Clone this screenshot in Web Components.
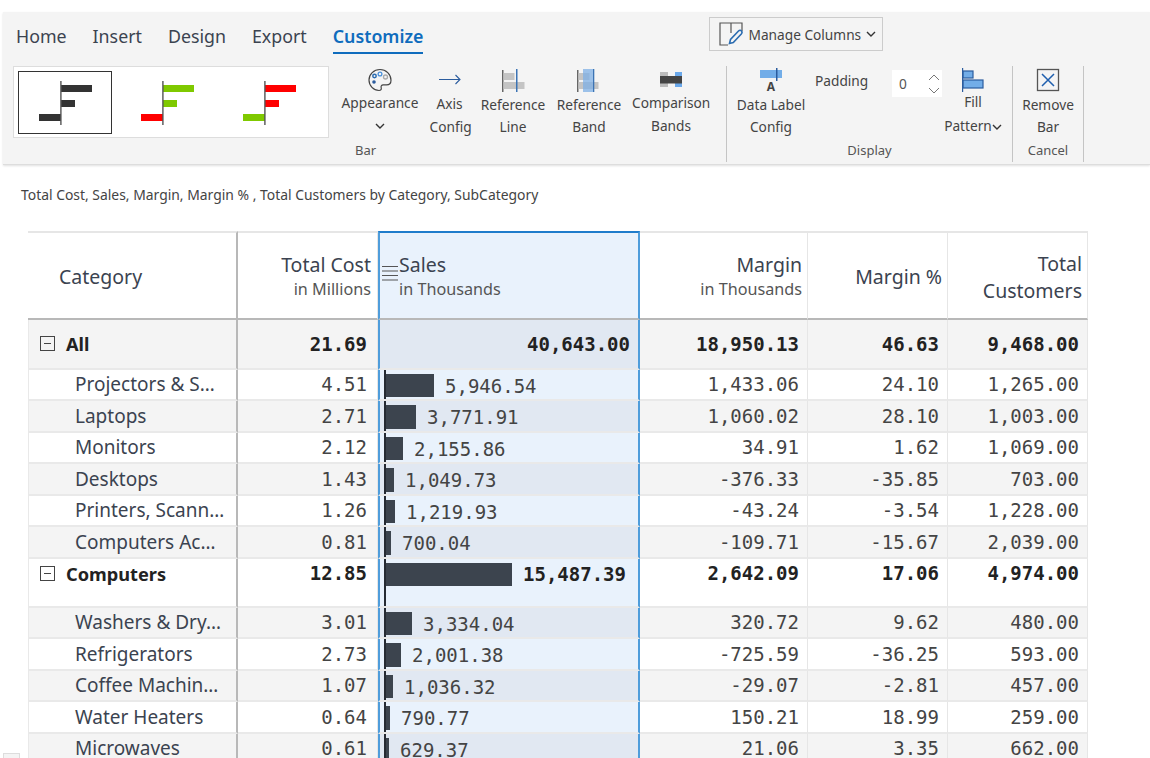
<!DOCTYPE html>
<html lang="en">
<head>
<meta charset="utf-8">
<title>Customize</title>
<style>
  html, body { margin: 0; height: 758px; overflow: hidden; background: #fff; }
  body { font-family: "Noto Sans", "Open Sans", sans-serif; color: #333; }
  svg { display: block; }
</style>
</head>
<body>
<template id="tile-tpl">
  <svg width="94" height="63" viewBox="0 0 94 63">
    <rect class="c1" x="43" y="14" width="31" height="7"/>
    <rect class="c1" x="43" y="29" width="14" height="7"/>
    <rect class="c2" x="21" y="43" width="22" height="7"/>
    <rect x="42.2" y="10" width="1.4" height="44" fill="#555"/>
  </svg>
</template>

<app-ribbon>
  <gallery-tile slot="gallery" selected pos="#333" neg="#333"></gallery-tile>
  <gallery-tile slot="gallery" pos="#7fc900" neg="#ff0000"></gallery-tile>
  <gallery-tile slot="gallery" pos="#ff0000" neg="#7fc900"></gallery-tile>

  <ribbon-btn slot="bar" w="78" ih="24">
    <svg slot="icon" width="24" height="24" viewBox="0 0 24 24" fill="none"><path d="M12 1.500C5.800 1.500 1 6.200 1 12s4.600 10.500 10 10.500c2 0 2.600-1.200 2.200-2.600-.5-1.600.3-3 2-3h3.300c2.700 0 4.500-1.900 4.500-4.700C23 6.200 18 1.500 12 1.500z" stroke="#444" stroke-width="1.200"/><circle cx="12" cy="6" r="1.900" stroke="#4a90d9" stroke-width="1.300"/><circle cx="17.500" cy="9" r="2" stroke="#aaa" stroke-width="1.300"/><circle cx="6.500" cy="8" r="1.700" stroke="#2b6cb0" stroke-width="1.500"/><circle cx="6" cy="14" r="1.800" fill="#2b5c9e"/></svg>
    Appearance<br><chev-down></chev-down>
  </ribbon-btn>
  <ribbon-btn slot="bar" w="40" ih="24" lh="23">
    <svg slot="icon" width="24" height="24" viewBox="0 0 24 24" fill="none"><path d="M1 11.500h21M17.500 7 22 11.500 17.500 16" stroke="#2b5c9e" stroke-width="1.100"/></svg>
    Axis<br>Config
  </ribbon-btn>
  <ribbon-btn slot="bar" w="66" ih="26">
    <svg slot="icon" width="24" height="24" viewBox="0 0 24 24"><rect x="1" y="2" width="1.500" height="22" fill="#666"/><rect x="2.500" y="5" width="11" height="7" fill="#c4c4c4"/><rect x="2.500" y="14" width="21" height="7" fill="#c4c4c4"/><rect x="15" y="1" width="1.500" height="23" fill="#3b73b4"/></svg>
    Reference<br>Line
  </ribbon-btn>
  <ribbon-btn slot="bar" w="65" ih="26">
    <svg slot="icon" width="24" height="24" viewBox="0 0 24 24"><rect x="0" y="2" width="1.500" height="22" fill="#666"/><rect x="1.500" y="5" width="11" height="7" fill="#c4c4c4"/><rect x="1.500" y="14" width="20" height="7" fill="#c4c4c4"/><rect x="6" y="1" width="11" height="23" fill="#7fb0e6" opacity=".75"/><rect x="16" y="1" width="1.300" height="23" fill="#3b73b4"/></svg>
    Reference<br>Band
  </ribbon-btn>
  <ribbon-btn slot="bar" w="78" ih="23" lh="23">
    <svg slot="icon" width="24" height="24" viewBox="0 0 24 24"><rect x="1" y="4" width="8" height="15" fill="#bbb"/><rect x="16" y="4" width="7" height="15" fill="#6aa8ea"/><rect x="1" y="8" width="22" height="7.500" fill="#444"/></svg>
    Comparison<br>Bands
  </ribbon-btn>

  <ribbon-btn slot="display" w="70" ih="26">
    <svg slot="icon" width="24" height="26" viewBox="0 0 24 26"><rect x="1" y="2" width="22" height="8" fill="#72ade8"/><rect x="17" y="0" width="1.500" height="13" fill="#2b5c9e"/><text x="12" y="23" font-family="Noto Sans, sans-serif" font-size="12" font-weight="700" text-anchor="middle" fill="#444">A</text></svg>
    Data Label<br>Config
  </ribbon-btn>
  <padding-spinner slot="display"></padding-spinner>
  <ribbon-btn slot="display" w="60" ih="22" lh="24">
    <svg slot="icon" width="24" height="24" viewBox="0 0 24 24"><rect x="2" y="3" width="10" height="7" fill="#72ade8" stroke="#2b5c9e" stroke-width="1.200"/><rect x="2" y="12" width="20" height="8" fill="#72ade8" stroke="#2b5c9e" stroke-width="1.200"/><rect x="1" y="0" width="1.200" height="24" fill="#2b5c9e"/></svg>
    Fill<br>Pattern<chev-down></chev-down>
  </ribbon-btn>

  <ribbon-btn slot="cancel" w="52" ih="26">
    <svg slot="icon" width="24" height="24" viewBox="0 0 24 24" fill="none"><rect x="1.500" y="1.500" width="21" height="21" stroke="#555" stroke-width="1.300"/><path d="M6 6l12 12M18 6 6 18" stroke="#1f5fae" stroke-width="1.500"/></svg>
    Remove<br>Bar
  </ribbon-btn>
</app-ribbon>

<sub-title>Total Cost, Sales, Margin, Margin % , Total Customers by Category, SubCategory</sub-title>
<data-grid id="grid"></data-grid>
<corner-stub></corner-stub>

<script>
// small chevron, used in a couple of ribbon buttons
class ChevDown extends HTMLElement {
  constructor() {
    super();
    this.attachShadow({ mode: 'open' }).innerHTML = `
      <style>:host { display: inline-block; vertical-align: middle; }</style>
      <svg width="10" height="7" viewBox="0 0 10 7" fill="none" style="display:block"><path d="M1 1l4 4 4-4" stroke="#333" stroke-width="1.400"/></svg>`;
  }
}

class AppRibbon extends HTMLElement {
  constructor() {
    super();
    this.attachShadow({ mode: 'open' }).innerHTML = `
      <style>
        :host {
          display: block; margin: 12px 0 0 3px; height: 153px; box-sizing: border-box;
          background: #f4f4f4; border-bottom: 1px solid #ddd; box-shadow: 0 1px 2px rgba(0,0,0,.12);
          font-size: 13.7px; color: #444;
        }
        .tabs { display: flex; align-items: flex-start; height: 54px; padding-left: 13px; gap: 26px; font-size: 17.8px; }
        .tab { height: 40px; line-height: 48px; color: #3b4350; box-sizing: content-box; }
        .tab.on { color: #0f6cbd; font-weight: 600; border-bottom: 2px solid #0f6cbd; }
        .manage {
          margin: 5px 0 0 260px; width: 174px; height: 34px; box-sizing: border-box; border: 1px solid #ccc;
          display: flex; align-items: center; gap: 5px; padding-left: 9px; font-size: 13.7px; color: #444;
        }
        .lower { display: flex; padding-left: 10px; height: 96px; }
        .group { display: flex; flex-direction: column; border-right: 1px solid #c4c4c4; box-sizing: border-box; }
        .row { display: flex; flex: 1; }
        .cap { text-align: center; font-size: 13px; line-height: 23px; color: #555; }
        .bar { width: 714px; }
        .bar .row { gap: 10.5px; }
        .bar .cap { padding-right: 8px; }
        .gallery {
          width: 316px; height: 72px; box-sizing: border-box; background: #fff; border: 1px solid #ddd;
          display: flex; padding: 4px; gap: 8px; margin-right: 1.500px;
        }
        .display { width: 286px; }
        .display .row { padding-left: 9px; }
        .cancel { width: 71px; }
        .cancel .row { padding-left: 9px; }
      </style>
      <div class="tabs">
        <span class="tab">Home</span><span class="tab">Insert</span><span class="tab">Design</span><span class="tab">Export</span><span class="tab on">Customize</span>
        <div class="manage">
          <svg width="24" height="24" viewBox="0 0 24 24" fill="none" style="display:block"><path d="M9 23H1V1h22v8M12 1v10" stroke="#555" stroke-width="1.200"/><path d="M10.500 21.500l1-4 8-8.500c1-1 2.200-1 3 0s.7 2-.2 3l-8 8.500z" stroke="#2b6cb0" stroke-width="1.600"/></svg>
          <span>Manage Columns</span><chev-down></chev-down>
        </div>
      </div>
      <div class="lower">
        <div class="group bar">
          <div class="row"><div class="gallery"><slot name="gallery"></slot></div><slot name="bar"></slot></div>
          <div class="cap">Bar</div>
        </div>
        <div class="group display">
          <div class="row"><slot name="display"></slot></div>
          <div class="cap">Display</div>
        </div>
        <div class="group cancel">
          <div class="row"><slot name="cancel"></slot></div>
          <div class="cap">Cancel</div>
        </div>
      </div>`;
  }
}

class GalleryTile extends HTMLElement {
  constructor() {
    super();
    this.attachShadow({ mode: 'open' });
  }
  connectedCallback() {
    const tpl = document.getElementById('tile-tpl').content.cloneNode(true);
    tpl.querySelectorAll('.c1').forEach(r => r.setAttribute('fill', this.getAttribute('pos')));
    tpl.querySelectorAll('.c2').forEach(r => r.setAttribute('fill', this.getAttribute('neg')));
    this.shadowRoot.innerHTML = `<style>
      :host { display: block; width: 94px; height: 63px; box-sizing: border-box; }
      :host([selected]) { outline: 1px solid #333; outline-offset: -1px; }
      svg { display: block; }
    </style>`;
    this.shadowRoot.appendChild(tpl);
  }
}

class RibbonBtn extends HTMLElement {
  constructor() {
    super();
    this.attachShadow({ mode: 'open' });
  }
  connectedCallback() {
    const w = this.getAttribute('w') || 64;
    const ih = this.getAttribute('ih') || 24;
    const lh = this.getAttribute('lh') || 22;
    this.shadowRoot.innerHTML = `
      <style>
        :host { display: block; width: ${w}px; flex: none; text-align: center; line-height: ${lh}px; font-size: 13.7px; color: #444; white-space: nowrap; }
        .ic { height: ${ih}px; padding-top: 2px; display: flex; justify-content: center; }
      </style>
      <div class="ic"><slot name="icon"></slot></div>
      <slot></slot>`;
  }
}

class PaddingSpinner extends HTMLElement {
  constructor() {
    super();
    this.attachShadow({ mode: 'open' }).innerHTML = `
      <style>
        :host { display: flex; width: 137px; flex: none; padding: 4px 0 0 9px; box-sizing: border-box; font-size: 13.7px; color: #444; }
        .lbl { width: 77px; line-height: 22px; }
        .box { width: 50px; height: 27px; background: #fff; display: flex; align-items: center; justify-content: space-between; padding: 0 2px 0 7px; box-sizing: border-box; color: #555; }
      </style>
      <span class="lbl">Padding</span>
      <div class="box"><span>0</span>
        <svg width="12" height="22" viewBox="0 0 12 22" fill="none" style="display:block"><path d="M1 7l5-5 5 5M1 15l5 5 5-5" stroke="#777" stroke-width="1"/></svg>
      </div>`;
  }
}

class SubTitle extends HTMLElement {
  constructor() {
    super();
    this.attachShadow({ mode: 'open' }).innerHTML = `
      <style>:host { display: block; margin: 20px 0 0 21px; height: 46px; font-size: 13.9px; line-height: 20px; color: #444; }</style>
      <slot></slot>`;
  }
}

class GridRow extends HTMLElement {
  constructor() {
    super();
    this.attachShadow({ mode: 'open' }).innerHTML = `
      <style>
        :host {
          display: grid; grid-template-columns: 210px 140px 262px 168px 140px 140px;
          --row-bg: #fff; --sales-bg: #e9f2fc; height: 31.5px; box-sizing: border-box;
        }
        :host([alt]) { --row-bg: #f4f4f4; --sales-bg: #e1e8f2; }
        :host([tall]) { height: 49.5px; }
        :host([grp]) { height: 49px; }
        :host([head]) { height: 89px; }
      </style>
      <slot></slot>`;
  }
}

class GridCell extends HTMLElement {
  constructor() {
    super();
    this.attachShadow({ mode: 'open' }).innerHTML = `
      <style>
        :host {
          display: flex; align-items: center; justify-content: flex-end; box-sizing: border-box; min-width: 0;
          background: var(--row-bg); border-right: 1px solid #e6e6e6; border-bottom: 2px solid #e9e9e9;
          padding: 0 8px; font-family: "DejaVu Sans Mono", monospace; font-size: 19px; color: #444; white-space: nowrap;
        }
        :host([bold]) { font-weight: 700; color: #222; }
        :host([top]) { align-items: flex-start; padding-top: 3px; }
        :host([kind="name"]) {
          justify-content: flex-start; padding-left: 46px; font-family: "Noto Sans", sans-serif; color: #3b4350;
          border-left: 1px solid #e9e9e9; border-right: 2px solid #b8b8b8;
        }
        :host([kind="name"][bold]) { padding-left: 11px; color: #222; font-size: 18.2px; }
        :host([kind="name"][top]) { padding-top: 3px; }
        :host([kind="cost"]) { padding-right: 10px; }
        :host([kind="sales"]) {
          justify-content: flex-start; background: var(--sales-bg); padding: 0 0 0 4px;
          border-left: 2px solid #4f9ddb; border-right: 2px solid #4f9ddb; color: #444;
        }
        :host([kind="sales"][bold]) { color: #222; }
        :host([kind="total"]) { justify-content: flex-end; background: var(--sales-bg); padding: 0 8px; border-left: 2px solid #4f9ddb; border-right: 2px solid #4f9ddb; }
        .tog { width: 15px; height: 15px; box-sizing: border-box; border: 1px solid #444; margin-right: 11px; position: relative; flex: none; }
        :host([top]) .tog { margin-top: 4px; }
        .tog::after { content: ""; position: absolute; left: 3px; right: 3px; top: 6px; height: 1px; background: #444; }
      </style>
      <span class="tog"></span><slot></slot>`;
  }
  connectedCallback() {
    const tog = this.shadowRoot.querySelector('.tog');
    if (tog && !this.hasAttribute('toggle')) tog.remove();
  }
}

class HeadCell extends HTMLElement {
  constructor() {
    super();
    this.attachShadow({ mode: 'open' }).innerHTML = `
      <style>
        :host {
          display: flex; flex-direction: column; justify-content: center; align-items: flex-end; box-sizing: border-box;
          border-top: 2px solid #e6e6e6; border-right: 1px solid #e6e6e6; border-bottom: 2px solid #b8b8b8;
          padding: 2px 5px 0; font-size: 19.5px; line-height: 24px; color: #3b4350; background: #fff; text-align: right;
        }
        :host([kind="cat"]) { align-items: flex-start; padding-left: 31px; border-right: 2px solid #b8b8b8; }
        :host([kind="cost"]) { padding-right: 6px; }
        :host([loose]) { line-height: 27px; }
        :host([kind="sales"]) {
          flex-direction: row; justify-content: flex-start; align-items: center; padding: 2px 0 0 2px; text-align: left; background: #e9f2fc;
          border: 2px solid #4f9ddb; border-top-color: #1f7ccb; border-bottom-color: #b8b8b8;
        }
      </style>
      <slot></slot>`;
  }
}

// second, smaller line of a column heading
class HeadSub extends HTMLElement {
  constructor() {
    super();
    this.attachShadow({ mode: 'open' }).innerHTML = `
      <style>:host { display: block; font-size: 16.2px; line-height: 24px; color: #555; }</style>
      <slot></slot>`;
  }
}

class SalesBar extends HTMLElement {
  constructor() {
    super();
    this.attachShadow({ mode: 'open' });
  }
  connectedCallback() {
    this.shadowRoot.innerHTML = `
      <style>
        :host { display: flex; height: 100%; align-items: stretch; }
        .axis { width: 2px; background: #262b33; flex: none; }
        .fill { width: ${this.getAttribute('w')}px; background: #3c444e; margin: 4px 0 2px; flex: none; }
        .val { margin-left: 11px; align-self: center; padding-top: 3px; }
        :host([bold]) .fill { margin: 4px 0 20px; }
        :host([bold]) .val { align-self: flex-start; padding-top: 4px; }
      </style>
      <span class="axis"></span><span class="fill"></span><span class="val"><slot></slot></span>`;
  }
}

class DataGrid extends HTMLElement {
  constructor() {
    super();
    this.attachShadow({ mode: 'open' }).innerHTML = `
      <style>:host { display: block; margin-left: 28px; width: 1060px; }</style>
      <slot></slot>`;
  }
}

class CornerStub extends HTMLElement {
  constructor() {
    super();
    this.attachShadow({ mode: 'open' }).innerHTML = `
      <style>:host { position: absolute; left: 3px; top: 753px; width: 17px; height: 5px; box-sizing: border-box; border: 1px solid #ddd; border-bottom: 0; background: #f4f4f4; }</style>`;
  }
}

customElements.define('chev-down', ChevDown);
customElements.define('app-ribbon', AppRibbon);
customElements.define('gallery-tile', GalleryTile);
customElements.define('ribbon-btn', RibbonBtn);
customElements.define('padding-spinner', PaddingSpinner);
customElements.define('sub-title', SubTitle);
customElements.define('grid-row', GridRow);
customElements.define('grid-cell', GridCell);
customElements.define('head-cell', HeadCell);
customElements.define('head-sub', HeadSub);
customElements.define('sales-bar', SalesBar);
customElements.define('data-grid', DataGrid);
customElements.define('corner-stub', CornerStub);

// name, cost, sales, bar width, margin, margin %, customers
const rows = [
  ['All', '21.69', '40,643.00', 0, '18,950.13', '46.63', '9,468.00', 'total'],
  ['Projectors &amp; S…', '4.51', '5,946.54', 48, '1,433.06', '24.10', '1,265.00'],
  ['Laptops', '2.71', '3,771.91', 30, '1,060.02', '28.10', '1,003.00'],
  ['Monitors', '2.12', '2,155.86', 17, '34.91', '1.62', '1,069.00'],
  ['Desktops', '1.43', '1,049.73', 8, '-376.33', '-35.85', '703.00'],
  ['Printers, Scann…', '1.26', '1,219.93', 9, '-43.24', '-3.54', '1,228.00'],
  ['Computers Ac…', '0.81', '700.04', 5, '-109.71', '-15.67', '2,039.00'],
  ['Computers', '12.85', '15,487.39', 126, '2,642.09', '17.06', '4,974.00', 'group'],
  ['Washers &amp; Dry…', '3.01', '3,334.04', 26, '320.72', '9.62', '480.00'],
  ['Refrigerators', '2.73', '2,001.38', 15, '-725.59', '-36.25', '593.00'],
  ['Coffee Machin…', '1.07', '1,036.32', 7, '-29.07', '-2.81', '457.00'],
  ['Water Heaters', '0.64', '790.77', 4, '150.21', '18.99', '259.00'],
  ['Microwaves', '0.61', '629.37', 3, '21.06', '3.35', '662.00']
];

const grid = document.getElementById('grid');
let html = `
  <grid-row head>
    <head-cell kind="cat">Category</head-cell>
    <head-cell kind="cost"><span>Total Cost</span><head-sub>in Millions</head-sub></head-cell>
    <head-cell kind="sales">
      <svg width="16" height="16" viewBox="0 0 16 16" style="display:block;margin-bottom:8px"><path d="M0 1.500h16M0 6h16M0 10.500h16M0 15h16" stroke="#555" stroke-width="1"/></svg>
      <div style="margin-left:1px"><span>Sales</span><head-sub>in Thousands</head-sub></div>
    </head-cell>
    <head-cell><span>Margin</span><head-sub>in Thousands</head-sub></head-cell>
    <head-cell>Margin %</head-cell>
    <head-cell loose><span>Total</span><span>Customers</span></head-cell>
  </grid-row>`;

let alt = false;
html += rows.map(r => {
  const [name, cost, sales, w, margin, pct, cust, type] = r;
  const bold = type ? 'bold' : '';
  const top = type === 'group' ? 'top' : '';
  let rowAttr = '';
  if (type === 'total') { rowAttr = 'alt tall'; alt = false; }
  else if (type === 'group') { rowAttr = 'grp'; alt = true; }
  else { if (alt) rowAttr = 'alt'; alt = !alt; }
  const salesCell = type === 'total'
    ? `<grid-cell kind="total" bold>${sales}</grid-cell>`
    : `<grid-cell kind="sales" ${bold}><sales-bar w="${w}" ${bold}>${sales}</sales-bar></grid-cell>`;
  return `<grid-row ${rowAttr}>
    <grid-cell kind="name" ${bold} ${top} ${type ? 'toggle' : ''}>${name}</grid-cell>
    <grid-cell kind="cost" ${bold} ${top}>${cost}</grid-cell>
    ${salesCell}
    <grid-cell ${bold} ${top}>${margin}</grid-cell>
    <grid-cell ${bold} ${top}>${pct}</grid-cell>
    <grid-cell ${bold} ${top}>${cust}</grid-cell>
  </grid-row>`;
}).join('');
grid.innerHTML = html;
</script>
</body>
</html>
